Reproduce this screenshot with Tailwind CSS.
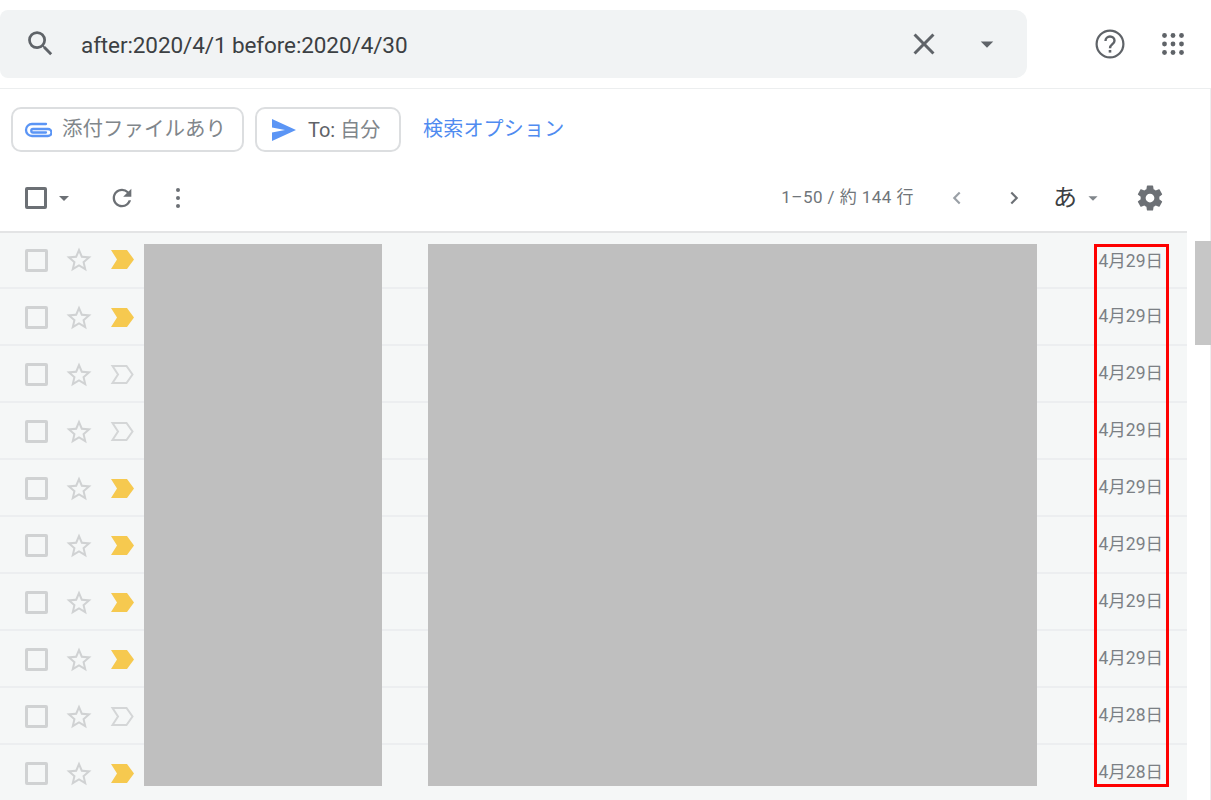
<!DOCTYPE html>
<html lang="ja">
<head>
<meta charset="UTF-8">
<title>Gmail search</title>
<script src="https://cdn.jsdelivr.net/npm/@tailwindcss/browser@4"></script>
</head>
<body class="bg-white h-[800px] overflow-hidden relative font-['Roboto','Noto_Sans_CJK_JP',sans-serif]">
  <!-- search header -->
  <header class="h-[88px] pt-[10px] flex">
    <div class="w-[1027px] h-[68px] bg-[#f1f3f4] rounded-r-xl rounded-l-lg flex items-center">
      <svg class="w-[33px] h-[33px] ml-[24px] -mt-[2px] text-[#5f6368]" viewBox="0 0 24 24" fill="currentColor"><path d="M15.5 14h-.79l-.28-.27A6.47 6.47 0 0 0 16 9.5 6.5 6.5 0 1 0 9.5 16c1.61 0 3.09-.59 4.23-1.57l.27.28v.79l5 4.99L20.49 19l-4.99-5zm-6 0C7.01 14 5 11.99 5 9.5S7.01 5 9.5 5 14 7.01 14 9.5 11.99 14 9.5 14z"/></svg>
      <span class="ml-[24px] mt-[3px] text-[22.5px] tracking-[-0.1px] text-[#3c4043]">after:2020/4/1 before:2020/4/30</span>
      <svg class="w-[36px] h-[36px] ml-auto text-[#5f6368]" viewBox="0 0 24 24" fill="currentColor"><path d="M19 6.41 17.59 5 12 10.59 6.41 5 5 6.41 10.59 12 5 17.59 6.41 19 12 13.41 17.59 19 19 17.59 13.41 12z"/></svg>
      <svg class="w-[30px] h-[30px] ml-[30px] mr-[25px] text-[#5f6368]" viewBox="0 0 24 24" fill="currentColor"><path d="M7 10l5 5 5-5z"/></svg>
    </div>
    <div class="flex items-center h-[68px]">
      <svg class="w-[30px] h-[30px] ml-[68px] text-[#5f6368]" viewBox="0 0 30 30" fill="none" stroke="currentColor" stroke-width="2.200"><circle cx="15" cy="15" r="13.400"/><path d="M10.500 12c0-2.700 2-4.500 4.500-4.500s4.500 1.800 4.500 4.300c0 3.400-4.500 3.400-4.500 7.400" stroke-width="2.400"/><path d="M15 21v2.600" stroke-width="2.600"/></svg>
      <svg class="w-[24px] h-[24px] ml-[36px] text-[#5f6368]" viewBox="0 0 24 24" fill="currentColor"><circle cx="3.5" cy="3.5" r="2.4"/><circle cx="12" cy="3.5" r="2.4"/><circle cx="20.5" cy="3.5" r="2.4"/><circle cx="3.5" cy="12" r="2.4"/><circle cx="12" cy="12" r="2.4"/><circle cx="20.5" cy="12" r="2.4"/><circle cx="3.5" cy="20.5" r="2.4"/><circle cx="12" cy="20.5" r="2.4"/><circle cx="20.5" cy="20.5" r="2.4"/></svg>
    </div>
  </header>

  <!-- panel -->
  <main class="w-[1211px] border-t border-r border-[#eceeef]">
    <div class="h-[81px] pl-[11px] pt-[18px] flex items-start">
      <div class="w-[233px] h-[45px] border-2 border-[#dcdee0] rounded-[10px] flex items-center pl-[11px]">
        <svg class="w-[28px] h-[28px] text-[#5b95f5]" viewBox="0 0 28 28" fill="none" stroke="currentColor" stroke-width="2.300" stroke-linecap="round"><path d="M22 8H8a6 6 0 0 0 0 12h16a3.500 3.500 0 0 0 0-7H9a1.750 1.750 0 0 0 0 3.500h13"/></svg>
        <span class="ml-[10px] text-[20.5px] text-[#80868b]">添付ファイルあり</span>
      </div>
      <div class="ml-[11px] w-[146px] h-[45px] border-2 border-[#dcdee0] rounded-[10px] flex items-center pl-[13px]">
        <svg class="w-[28px] h-[26px] text-[#5b95f5]" viewBox="0 0 28 26" fill="currentColor"><path d="M2 2l24 11L2 24v-8.500L15 13 2 10.500z"/></svg>
        <span class="ml-[10px] text-[20px] text-[#5f6368]">To: <span class="text-[#80868b]">自分</span></span>
      </div>
      <span class="ml-[22px] mt-[7px] text-[20px] tracking-[0.2px] text-[#4f8bf0]">検索オプション</span>
    </div>

    <!-- toolbar -->
    <div class="w-[1187px] h-[63px] pb-[6px] flex items-center border-b-2 border-[#e3e4e5] bg-white text-[#5f6368]">
      <span class="ml-[25px] w-[22px] h-[22px] border-[3px] border-[#6c7075] rounded-[2px]"></span>
      <svg class="w-[24px] h-[24px] ml-[5px] text-[#6c7075]" viewBox="0 0 24 24" fill="currentColor"><path d="M7 10l5 5 5-5z"/></svg>
      <svg class="w-[28px] h-[28px] ml-[32px] text-[#6c7075]" viewBox="0 0 24 24" fill="currentColor"><path d="M17.650 6.350A7.958 7.958 0 0 0 12 4c-4.420 0-7.990 3.580-7.990 8s3.570 8 7.990 8c3.730 0 6.840-2.550 7.730-6h-2.080A5.990 5.990 0 0 1 12 18c-3.310 0-6-2.690-6-6s2.690-6 6-6c1.660 0 3.140.690 4.220 1.780L13 11h7V4l-2.350 2.350z"/></svg>
      <svg class="w-[6px] h-[22px] ml-[39px] text-[#6c7075]" viewBox="0 0 6 22" fill="currentColor"><circle cx="3" cy="3" r="2"/><circle cx="3" cy="11" r="2"/><circle cx="3" cy="19" r="2"/></svg>
      <span class="ml-auto text-[17px] tracking-[0.45px] text-[#70757a]">1–50 / 約 144 行</span>
      <svg class="w-[26px] h-[26px] ml-[30px] text-[#9aa0a6]" viewBox="0 0 24 24" fill="none" stroke="currentColor" stroke-width="2"><path d="M14.500 7l-5 5 5 5"/></svg>
      <svg class="w-[26px] h-[26px] ml-[31px] text-[#6c7075]" viewBox="0 0 24 24" fill="none" stroke="currentColor" stroke-width="2"><path d="M9.500 7l5 5-5 5"/></svg>
      <span class="ml-[26px] text-[24px] leading-none text-[#3c4043]">あ</span>
      <svg class="w-[22px] h-[22px] ml-[5px] text-[#80868b]" viewBox="0 0 24 24" fill="currentColor"><path d="M7 10l5 5 5-5z"/></svg>
      <svg class="w-[30px] h-[30px] ml-[31px] mr-[22px] text-[#6c7075]" viewBox="0 0 24 24" fill="currentColor"><path d="M19.430 12.980c.040-.320.070-.640.070-.980s-.030-.660-.070-.980l2.110-1.650c.190-.150.240-.420.120-.640l-2-3.460c-.120-.220-.390-.300-.610-.220l-2.490 1c-.520-.400-1.080-.730-1.690-.980l-.380-2.650A.488.488 0 0 0 14 2h-4c-.250 0-.460.180-.490.420l-.380 2.650c-.610.250-1.170.590-1.690.980l-2.490-1c-.230-.090-.490 0-.610.220l-2 3.460c-.130.220-.070.490.120.640l2.110 1.650c-.040.320-.070.650-.070.980s.030.660.070.980l-2.110 1.650c-.190.150-.240.420-.120.640l2 3.460c.120.220.390.300.610.220l2.490-1c.520.400 1.080.730 1.690.980l.380 2.650c.030.240.240.420.490.420h4c.250 0 .460-.180.490-.420l.380-2.650c.610-.250 1.170-.590 1.690-.980l2.490 1c.230.090.490 0 .610-.220l2-3.460c.120-.220.070-.490-.120-.640l-2.110-1.650zM12 15.500c-1.930 0-3.500-1.570-3.500-3.500s1.570-3.500 3.500-3.500 3.500 1.570 3.500 3.500-1.570 3.500-3.500 3.500z"/></svg>
    </div>

    <!-- message rows -->
    <div id="rows" class="w-[1187px] bg-[#f5f7f7]"></div>
  </main>

  <!-- redacted blocks and the red marker lie over the list -->
  <div class="absolute left-[144px] top-[244px] w-[238px] h-[542px] bg-[#bfbfbf]"></div>
  <div class="absolute left-[428px] top-[244px] w-[609px] h-[542px] bg-[#bfbfbf]"></div>
  <div class="absolute left-[1094px] top-[244px] w-[75px] h-[543px] border-[3px] border-[#fe0000]"></div>
  <div class="absolute left-[1195px] top-[241px] w-[16px] h-[104px] bg-[#c6c6c6]"></div>

  <script>
    const rows = [
      ['4月29日', true], ['4月29日', true], ['4月29日', false], ['4月29日', false], ['4月29日', true],
      ['4月29日', true], ['4月29日', true], ['4月29日', true], ['4月28日', false], ['4月28日', true]
    ];
    const important = '<path d="M1 2h16l7 9.500-7 9.500H1l6-9.500z" fill="#f6c94f"/>';
    const notImportant = '<path d="M2.500 3h14l6 8.500-6 8.500h-14l5.500-8.500z" fill="none" stroke="#d4d6d7" stroke-width="2"/>';

    // Build the ten message rows
    document.getElementById('rows').innerHTML = rows.map(([date, flagged]) => `
      <div class="group h-[57px] pt-[2px] flex items-center border-b-2 border-[#eceef0] first:h-[56px] first:pt-0">
        <span class="ml-[25px] w-[23px] h-[23px] border-[3px] border-[#d0d2d3] rounded-[2px]"></span>
        <svg class="w-[30px] h-[30px] ml-[16px] text-[#d0d2d3]" viewBox="0 0 24 24" fill="currentColor"><path d="M22 9.240l-7.190-.620L12 2 9.190 8.630 2 9.240l5.460 4.730L5.820 21 12 17.270 18.180 21l-1.630-7.030L22 9.240zM12 15.400l-3.760 2.270 1-4.280-3.320-2.880 4.380-.380L12 6.100l1.710 4.040 4.380.380-3.320 2.880 1 4.280L12 15.400z"/></svg>
        <svg class="w-[24px] h-[24px] ml-[16px]" viewBox="0 0 24 24">${flagged ? important : notImportant}</svg>
        <span class="ml-auto mr-[24px] -mt-[2px] group-first:mt-[2px] text-[17.5px] text-[#7b8085]">${date}</span>
      </div>`).join('');
  </script>
</body>
</html>
